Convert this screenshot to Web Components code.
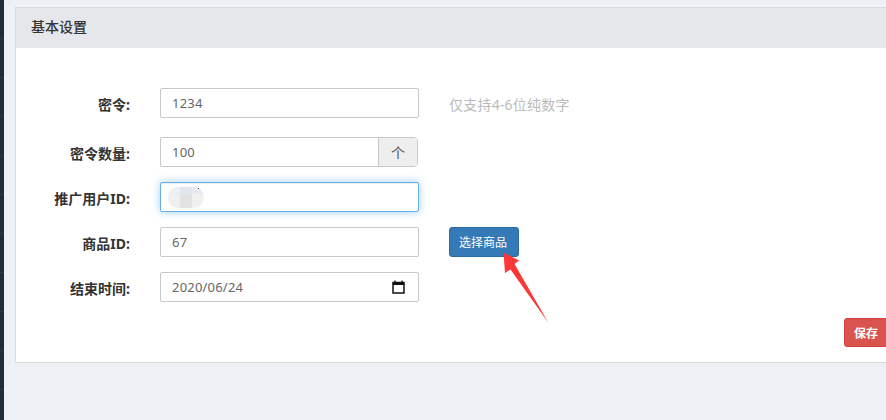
<!DOCTYPE html>
<html>
<head>
<meta charset="utf-8">
<style>
html,body{margin:0;padding:0;height:100%;overflow:hidden;background:#eff0f5;}
body{font-family:"Noto Sans","Noto Sans CJK SC",sans-serif;}
</style>
</head>
<body>
<admin-page>
	<setting-panel title-text="基本设置">
		<form-row label="密令:" value="1234" gap="19"><span slot="after" style="display:block;color:#bbb;font-size:14px;height:30px;line-height:34px;letter-spacing:.22px;">仅支持4-6位纯数字</span></form-row>
		<form-row label="密令数量:" value="100" addon="个" gap="15"></form-row>
		<form-row label="推广用户ID:" focused blurred gap="15"></form-row>
		<form-row label="商品ID:" value="67" gap="15"><app-button slot="after" color="blue">选择商品</app-button></form-row>
		<form-row label="结束时间:" value="2020/06/24" calendar gap="0"></form-row>
		<app-button slot="footer" color="red">保存</app-button>
	</setting-panel>
	<red-arrow></red-arrow>
</admin-page>
<script>
class AdminPage extends HTMLElement{
	constructor(){
		super();
		this.attachShadow({mode:"open"}).innerHTML = `
<style>
:host{display:flex;position:relative;width:886px;height:420px;overflow:hidden;background:#eff0f5;}
.side{
	width:4px;flex:none;
	background:repeating-linear-gradient(to bottom,#1f2d3d 0,#1f2d3d 38px,#2b3a4b 38px,#2b3a4b 39px);
}
.main{padding:7px 0 0 11px;flex:none;}
</style>
<div class="side"></div>
<div class="main"><slot></slot></div>`;
	}
}
class SettingPanel extends HTMLElement{
	constructor(){
		super();
		this.attachShadow({mode:"open"}).innerHTML = `
<style>
:host{display:block;width:900px;height:356px;box-sizing:border-box;background:#fff;border:1px solid #d9dadc;}
.head{height:40px;background:#e6e7eb;color:#333;font-size:14px;font-weight:500;line-height:38px;padding-left:15px;}
.body{padding-top:40px;}
.foot{display:flex;margin:16px 0 0 828px;}
</style>
<div class="head"></div>
<div class="body"><slot></slot></div>
<div class="foot"><slot name="footer"></slot></div>`;
		this.shadowRoot.querySelector(".head").textContent = this.getAttribute("title-text");
	}
}
class FormRow extends HTMLElement{
	constructor(){
		super();
		this.attachShadow({mode:"open"}).innerHTML = `
<style>
:host{display:grid;grid-template-columns:114px 259px auto;column-gap:30px;align-items:start;}
.label{font-size:14px;font-weight:700;color:#333;text-align:right;line-height:31px;padding-top:1px;height:29px;}
.box{position:relative;box-sizing:border-box;height:30px;display:flex;background:#fff;border:1px solid #c8c8c8;border-radius:2px;color:#666;font-size:13px;line-height:29px;}
:host([addon]) .box{width:258px;border-radius:2px 4px 4px 2px;}
.val{flex:1;padding-left:11px;letter-spacing:.2px;}
.addon{width:38px;background:#eee;border-left:1px solid #c8c8c8;text-align:center;border-radius:0 3px 3px 0;font-size:14px;color:#555;}
:host([focused]) .box{border-color:#66afe9;box-shadow:inset 0 1px 1px rgba(0,0,0,.075),0 0 8px rgba(102,175,233,.6);}
.smudge{position:absolute;left:7px;top:4px;width:36px;height:21px;border-radius:11px;background:linear-gradient(to right,#f0f0f0 0,#f0f0f0 12px,#e3e3e3 12px,#e3e3e3 24px,#f0f0f0 24px);overflow:hidden;}
.smudge::before{content:"";position:absolute;left:0;top:0;right:0;height:7px;background:linear-gradient(to right,#eceff3 0,#eceff3 12px,#e0e7ef 12px,#e0e7ef 24px,#e6ebf1 24px);}
.dot{position:absolute;left:37px;top:5px;width:1px;height:1px;background:#333;}
.cal{position:absolute;right:13px;top:7px;}
</style>
<div class="label"></div>
<div class="box"><span class="val"></span></div>
<div class="after"><slot name="after"></slot></div>`;
		const root = this.shadowRoot;
		root.querySelector(".label").textContent = this.getAttribute("label");
		root.querySelector(".val").textContent = this.getAttribute("value") || "";
		this.style.marginBottom = (this.getAttribute("gap") || 0) + "px";
		const box = root.querySelector(".box");
		if(this.hasAttribute("addon")){
			let a = document.createElement("span");
			a.className = "addon";
			a.textContent = this.getAttribute("addon");
			box.appendChild(a);
		}
		if(this.hasAttribute("blurred")){
			box.insertAdjacentHTML("beforeend",`<span class="smudge"></span><span class="dot"></span>`);
		}
		if(this.hasAttribute("calendar")){
			box.insertAdjacentHTML("beforeend",`<svg class="cal" width="13" height="14" viewBox="0 0 13 14"><path d="M1 2.5h11v10.5H1z" fill="none" stroke="#111" stroke-width="1.5"/><path d="M1 2h11v3H1z" fill="#111"/><path d="M3 0.5v2M10 0.5v2" stroke="#111" stroke-width="1.3"/></svg>`);
		}
	}
}
class AppButton extends HTMLElement{
	constructor(){
		super();
		this.attachShadow({mode:"open"}).innerHTML = `
<style>
:host{display:inline-block;box-sizing:border-box;height:30px;padding:0 9px;border-radius:3px;font-size:12px;line-height:29px;color:#fff;border:1px solid;white-space:nowrap;}
:host([color=blue]){background:#337ab7;border-color:#2e6da4;width:70px;}
:host([color=red]){background:#d9534f;border-color:#d43f3a;font-weight:700;height:29px;}
</style>
<slot></slot>`;
	}
}
class RedArrow extends HTMLElement{
	constructor(){
		super();
		this.attachShadow({mode:"open"}).innerHTML = `
<style>
:host{display:block;position:absolute;left:500px;top:250px;width:50px;height:75px;}
</style>
<svg width="50" height="75" viewBox="0 0 50 75"><path d="M3.5 2.5L19 10.5L14.5 14L48.5 73L10.5 19.5L5 23z" fill="#fb3838"/></svg>`;
	}
}
customElements.define("admin-page",AdminPage);
customElements.define("setting-panel",SettingPanel);
customElements.define("form-row",FormRow);
customElements.define("app-button",AppButton);
customElements.define("red-arrow",RedArrow);
</script>
</body>
</html>
